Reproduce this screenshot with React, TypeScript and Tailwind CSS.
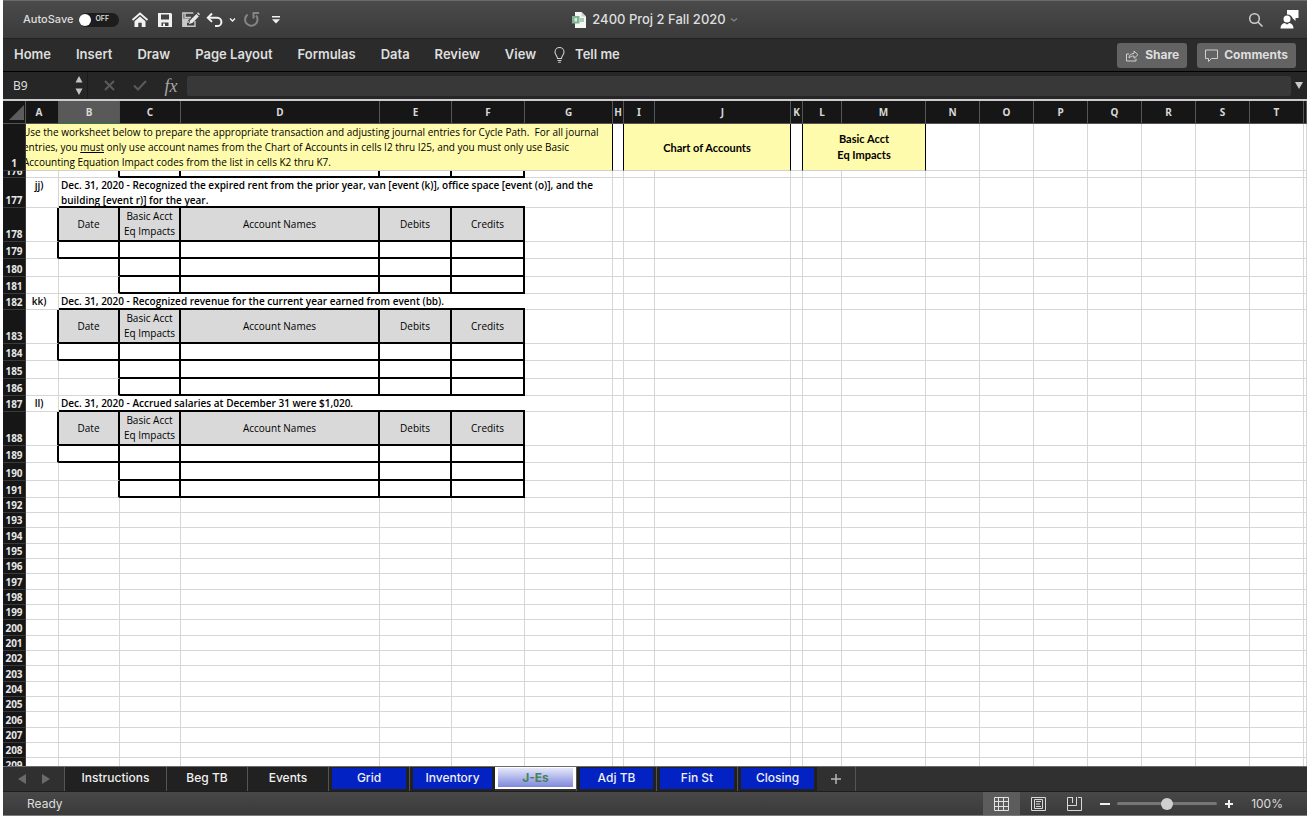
import { useState, type ReactNode } from "react";
import clsx from "clsx";

const columns = [
    { name: "A", width: "w-[33px]" },
    { name: "B", width: "w-[61px]" },
    { name: "C", width: "w-[61px]" },
    { name: "D", width: "w-[199px]" },
    { name: "E", width: "w-[72px]" },
    { name: "F", width: "w-[73px]" },
    { name: "G", width: "w-[88px]" },
    { name: "H", width: "w-[11px]" },
    { name: "I", width: "w-[31px]" },
    { name: "J", width: "w-[136px]" },
    { name: "K", width: "w-[12px]" },
    { name: "L", width: "w-[39px]" },
    { name: "M", width: "w-[84px]" },
    { name: "N", width: "w-[54px]" },
    { name: "O", width: "w-[54px]" },
    { name: "P", width: "w-[54px]" },
    { name: "Q", width: "w-[54px]" },
    { name: "R", width: "w-[54px]" },
    { name: "S", width: "w-[54px]" },
    { name: "T", width: "w-[54px]" },
    { name: "", width: "" },
];

const ribbonTabs = ["Home", "Insert", "Draw", "Page Layout", "Formulas", "Data", "Review", "View"];

const sheets = [
    { name: "Instructions", width: "w-[102px]", blue: false },
    { name: "Beg TB", width: "w-[81px]", blue: false },
    { name: "Events", width: "w-[81px]", blue: false },
    { name: "Grid", width: "w-[81px]", blue: true },
    { name: "Inventory", width: "w-[86px]", blue: true },
    { name: "J-Es", width: "w-[81px]", blue: true },
    { name: "Adj TB", width: "w-[80px]", blue: true },
    { name: "Fin St", width: "w-[81px]", blue: true },
    { name: "Closing", width: "w-[80px]", blue: true },
];

const entries = [
    {
        row: 177,
        code: "jj)",
        lines: [
            "Dec. 31, 2020 - Recognized the expired rent from the prior year, van [event (k)], office space [event (o)], and the",
            "building [event r)] for the year.",
        ],
    },
    {
        row: 182,
        code: "kk)",
        lines: ["Dec. 31, 2020 - Recognized revenue for the current year earned from event (bb)."],
    },
    {
        row: 187,
        code: "ll)",
        lines: ["Dec. 31, 2020 - Accrued salaries at December 31 were $1,020."],
    },
];

const emptyRows = Array.from({ length: 17 }, (_, i) => 192 + i);

export default function App() {
    return (
        <div className="pl-[3px] pr-px bg-white font-['Inter',sans-serif] text-[#dedede]">
            <TitleBar />
            <Ribbon />
            <FormulaBar />
            <Sheet />
            <SheetTabs />
            <StatusBar />
        </div>
    );
}

function TitleBar() {
    const [autoSave, setAutoSave] = useState(false);

    return (
        <header className="grid grid-cols-[1fr_auto_1fr] items-center h-[38px] px-2 border-t border-[#6a6a6a] bg-linear-to-b from-[#4a4a4a] to-[#3b3b3b]">
            <div className="flex items-center pl-3">
                <label htmlFor="autosave" className="text-[11px] font-medium">
                    AutoSave
                </label>
                <span className="relative ml-1.5 flex items-center w-10 h-3.5 rounded-full bg-[#1d1d1d]">
                    <input
                        id="autosave"
                        type="checkbox"
                        role="switch"
                        checked={autoSave}
                        onChange={(e) => setAutoSave(e.target.checked)}
                        className="peer appearance-none size-3 rounded-full bg-white checked:translate-x-7"
                    />
                    <span className="ml-1 text-[7px] font-semibold">{autoSave ? "" : "OFF"}</span>
                </span>
                <div className="flex items-center ml-3 text-[#f2f2f2]">
                    <ToolButton label="Home">
                        <svg width="18" height="18" viewBox="0 0 18 18" fill="none" stroke="currentColor">
                            <path d="M1.5 9 9 2.5 16.5 9" strokeWidth="1.8" />
                            <path d="M3.5 10.2 9 5.5l5.5 4.7V16h-3.8v-4.2H7.3V16H3.5z" fill="currentColor" stroke="none" />
                        </svg>
                    </ToolButton>
                    <ToolButton label="Save" className="ml-2">
                        <svg width="16" height="16" viewBox="0 0 16 16" fill="currentColor" fillRule="evenodd">
                            <path d="M1 1h13l1 1v13H1zM4 2.500v5h8v-5zM4.500 10.500V14H6v-2.500h2V14h3.500v-3.500z" />
                        </svg>
                    </ToolButton>
                    <ToolButton label="Save As" className="ml-2">
                        <svg width="19" height="17" viewBox="0 0 19 17" fill="none" stroke="#c9c9c9" strokeWidth="1.4">
                            <path d="M14 10v5.2H1.8V2h10.5" />
                            <path d="M4 2v4.5h6M5 15v-4h3" />
                            <path d="M2 7.5h7l-3 3.5v4H2z" fill="#c9c9c9" stroke="none" />
                            <path d="m8 13 1-3.6L15.4 3l2.4 2.4-6.4 6.5z" fill="#e8e8e8" stroke="none" />
                            <path d="m16 2.3 1-1 2 2-1 1z" fill="#e8e8e8" stroke="none" />
                        </svg>
                    </ToolButton>
                    <ToolButton label="Undo" className="ml-1.5">
                        <svg width="17" height="16" viewBox="0 0 17 16" fill="none" stroke="currentColor" strokeWidth="2">
                            <path d="M6 1.5 1.8 5.7 6 9.9" />
                            <path d="M2 5.7h9.2a4.2 4.2 0 0 1 0 8.4H9" />
                        </svg>
                    </ToolButton>
                    <ToolButton label="Undo history" className="ml-1.5">
                        <svg width="7" height="6" viewBox="0 0 7 6" fill="none" stroke="currentColor" strokeWidth="1.4">
                            <path d="m1 1.5 2.5 2.5L6 1.5" />
                        </svg>
                    </ToolButton>
                    <ToolButton label="Repeat" className="ml-2">
                        <svg width="16" height="17" viewBox="0 0 16 17" fill="none" stroke="#858585" strokeWidth="2">
                            <path d="M3.600 3.600A6.200 6.200 0 1 0 12 4.500" />
                            <path d="M9.500 7.500V2H15" />
                        </svg>
                    </ToolButton>
                    <ToolButton label="Customize toolbar" className="ml-3">
                        <svg width="8" height="9" viewBox="0 0 8 9" fill="currentColor">
                            <path d="M0 1h8v1.6H0zM0 4.2h8L4 8.4z" />
                        </svg>
                    </ToolButton>
                </div>
            </div>

            <button className="flex items-center text-[13px] font-medium">
                <svg width="14" height="16" viewBox="0 0 14 16" className="mr-1.5">
                    <path d="M3 0h6.5L14 4.5V16H3z" fill="#f4f7f4" />
                    <path d="M9.5 0v4.5H14z" fill="#c7d3ca" />
                    <path d="M0 4h7.5v7.5H0z" fill="#7fb392" />
                    <path d="M8 6h4v4H8z" fill="#a9cdb5" />
                    <path d="M2.5 6h2.5v3.5H2.5z" fill="#d9ebdf" />
                </svg>
                2400 Proj 2 Fall 2020
                <svg width="8" height="6" viewBox="0 0 8 6" fill="none" stroke="#888" strokeWidth="1.2" className="ml-1">
                    <path d="m1 1.5 3 2.5 3-2.5" />
                </svg>
            </button>

            <div className="flex items-center justify-end gap-4">
                <ToolButton label="Search">
                    <svg width="16" height="16" viewBox="0 0 16 16" fill="none" stroke="#cfcfcf" strokeWidth="1.5">
                        <circle cx="6.5" cy="6.5" r="4.8" />
                        <path d="m10 10 4.5 4.5" />
                    </svg>
                </ToolButton>
                <ToolButton label="Account">
                    <svg width="19" height="19" viewBox="0 0 19 19" fill="#fff">
                        <path d="M7 0h11.500v8h-3v3l-3-3A5.500 5.500 0 0 0 7 4.500z" />
                        <circle cx="7" cy="9" r="3.500" />
                        <path d="M.5 18.500c0-3.400 1.800-5.200 4.200-5.600L7 14.500l2.300-1.600c2.400.4 4.200 2.200 4.200 5.600z" />
                    </svg>
                </ToolButton>
            </div>
        </header>
    );
}

function ToolButton({ label, className, children }: { label: string; className?: string; children: ReactNode }) {
    return (
        <button aria-label={label} className={clsx("flex items-center justify-center", className)}>
            {children}
        </button>
    );
}

function Ribbon() {
    return (
        <nav className="flex items-center h-[34px] px-[11px] border-t border-b border-t-[#222] border-b-black bg-[#2b2b2b] text-[13px] font-semibold">
            <div className="flex gap-[25px]">
                {ribbonTabs.map((tab) => (
                    <button key={tab}>{tab}</button>
                ))}
            </div>
            <button className="flex items-center ml-[18px]">
                <svg width="11" height="16" viewBox="0 0 11 16" fill="none" stroke="#cfcfcf" strokeWidth="1.1" className="mr-2.5">
                    <path d="M3.5 11.5C3.5 9 1 8 1 5a4.5 4.5 0 0 1 9 0c0 3-2.5 4-2.5 6.5zM3.5 13.5h4M4.2 15.2h2.6" />
                </svg>
                Tell me
            </button>
            <div className="flex gap-2.5 ml-auto text-xs font-bold">
                <button className="flex items-center h-[25px] px-2 rounded-[3px] bg-[#636363]">
                    <svg width="14" height="13" viewBox="0 0 14 13" fill="none" stroke="#d0d0d0" className="mr-1.5">
                        <path d="M4 5H1.5v7H11V9.5" />
                        <path d="M4 9c0-3 2-4.5 5-4.5V2l4 3.7-4 3.7V7C7 7 5.500 7.500 4 9z" />
                    </svg>
                    Share
                </button>
                <button className="flex items-center h-[25px] px-2 rounded-[3px] bg-[#636363]">
                    <svg width="13" height="13" viewBox="0 0 13 13" fill="none" stroke="#d0d0d0" className="mr-1.5">
                        <path d="M.5 1h12v8.500H6.500L3.500 12.500V9.500H.5z" />
                    </svg>
                    Comments
                </button>
            </div>
        </nav>
    );
}

function FormulaBar() {
    return (
        <div className="flex items-center h-[29px] border-b-2 border-[#cfcacf] bg-[#262626]">
            <input
                aria-label="Name box"
                defaultValue="B9"
                className="w-[72px] pl-2.5 bg-transparent font-['Noto_Sans',sans-serif] text-xs outline-none"
            />
            <button aria-label="Name list" className="w-[13px] h-full border-r border-[#1c1c1c]">
                <svg width="8" height="19" viewBox="0 0 8 19" fill="#c4c4c4">
                    <path d="M.5 6.500 4 0l3.500 6.500zM.5 12.500h7L4 19z" />
                </svg>
            </button>
            <button aria-label="Cancel" className="ml-4">
                <svg width="11" height="11" viewBox="0 0 11 11" stroke="#5a5a5a" strokeWidth="2">
                    <path d="m1 1 9 9M10 1l-9 9" />
                </svg>
            </button>
            <button aria-label="Enter" className="ml-[18px]">
                <svg width="14" height="11" viewBox="0 0 14 11" fill="none" stroke="#5a5a5a" strokeWidth="2">
                    <path d="m1 5.500 4 4L13 1" />
                </svg>
            </button>
            <button
                aria-label="Insert function"
                className="ml-4 w-4 font-['Liberation_Serif',serif] text-[18px] leading-5 italic text-[#a8a8a8]"
            >
                fx
            </button>
            <input
                aria-label="Formula"
                className="flex-1 ml-2 h-5 px-2 rounded-xs bg-[#383838] text-xs outline-none"
            />
            <button aria-label="Expand formula bar" className="px-1">
                <svg width="8" height="7" viewBox="0 0 8 7" fill="#c9c9c9">
                    <path d="M0 0h8L4 7z" />
                </svg>
            </button>
        </div>
    );
}

function Sheet() {
    return (
        <div className="overflow-hidden">
            <table className="w-full table-fixed border-separate border-spacing-0 bg-white font-['Open_Sans',sans-serif] text-[10px] leading-[15px] text-black">
                <colgroup>
                    <col className="w-[23px]" />
                    {columns.map((col, i) => (
                        <col key={i} className={col.width} />
                    ))}
                </colgroup>
                <thead>
                    <tr className="h-[23px] bg-[#161616] font-['Noto_Sans',sans-serif] text-[#d8d8d8]">
                        <th className="p-0 border-r border-b border-[#555]">
                            <svg width="15" height="15" viewBox="0 0 15 15" fill="#5c5c5c" className="ml-1.5">
                                <path d="M15 0v15H0z" />
                            </svg>
                        </th>
                        {columns.map((col, i) => (
                            <th
                                key={i}
                                scope="col"
                                className={clsx(
                                    "p-0 text-center font-bold border-r border-b border-r-[#555]",
                                    col.name === "B" ? "bg-[#595959] border-b-[#2f7d3d]" : "border-b-[#555]",
                                    col.name === "A" && "pr-1.5",
                                )}
                            >
                                {col.name}
                            </th>
                        ))}
                    </tr>
                </thead>
                <tbody>
                    <tr className="h-[47px]">
                        <RowHeader>1</RowHeader>
                        <td colSpan={7} className="p-0 bg-[#fffbac] border-r border-b border-r-black border-b-[#d0d0d0]">
                            <div className="overflow-hidden whitespace-nowrap">
                                <div className="-ml-[3px]">
                                    Use the worksheet below to prepare the appropriate transaction and adjusting journal
                                    entries for Cycle Path.&nbsp; For all journal
                                    <br />
                                    entries, you <u>must</u> only use account names from the Chart of Accounts in cells I2
                                    thru I25, and you must only use Basic
                                    <br />
                                    Accounting Equation Impact codes from the list in cells K2 thru K7.
                                </div>
                            </div>
                        </td>
                        <Cell className="border-r-black" />
                        <td colSpan={2} className="p-0 text-center font-['Lato',sans-serif] text-[11px] font-bold bg-[#fffbac] border-r border-b border-r-black border-b-[#d0d0d0]">
                            Chart of Accounts
                        </td>
                        <Cell className="border-r-black" />
                        <td colSpan={2} className="p-0 text-center font-['Lato',sans-serif] text-[11px] leading-4 font-bold bg-[#fffbac] border-r border-b border-r-black border-b-[#d0d0d0]">
                            Basic Acct
                            <br />
                            Eq Impacts
                        </td>
                        <GridCells from={13} />
                    </tr>
                    <tr className="h-[7px]">
                        <th className="p-0 bg-[#161616] border-r border-b border-[#3a3a3a]">
                            <div className="flex items-end justify-center h-[6px] overflow-hidden font-['Noto_Sans',sans-serif] text-[10px] leading-3 font-bold text-[#e6e6e6]">
                                176
                            </div>
                        </th>
                        <Cell />
                        <Cell className="border-r-2 border-r-black" />
                        {["C", "D", "E", "F"].map((c) => (
                            <Cell key={c} className="border-r-2 border-b-2 border-black" />
                        ))}
                        <GridCells from={6} />
                    </tr>
                    {entries.map((entry) => (
                        <EntryRows key={entry.row} {...entry} />
                    ))}
                    {emptyRows.map((n, i) => (
                        <tr key={n} className={i % 3 === 2 ? "h-4" : "h-[15px]"}>
                            <RowHeader>{n}</RowHeader>
                            <GridCells from={0} />
                        </tr>
                    ))}
                    <tr className="h-2">
                        <th className="p-0 bg-[#161616] border-r border-[#3a3a3a]">
                            <div className="h-2 overflow-hidden font-['Noto_Sans',sans-serif] text-[10px] leading-[15px] font-bold text-[#e6e6e6]">
                                209
                            </div>
                        </th>
                        {columns.map((_, i) => (
                            <td key={i} className="p-0 border-r border-[#d6d6d6]" />
                        ))}
                    </tr>
                </tbody>
            </table>
        </div>
    );
}

function EntryRows({ row, code, lines }: { row: number; code: string; lines: string[] }) {
    return (
        <>
            <tr className={lines.length > 1 ? "h-[30px]" : "h-4"}>
                <RowHeader>{row}</RowHeader>
                <Cell className="pr-1.5 align-top text-center font-semibold">{code}</Cell>
                {/* description spills over B to G, the frame below starts with its bottom border */}
                <td colSpan={5} className="p-0 pl-0.5 align-top font-semibold whitespace-nowrap border-b-2 border-black">
                    <div className="h-[14px]">
                        {lines.map((line) => (
                            <div key={line}>{line}</div>
                        ))}
                    </div>
                </td>
                <GridCells from={6} />
            </tr>
            <tr className="h-[34px]">
                <RowHeader>{row + 1}</RowHeader>
                <Cell className="border-r-2 border-r-black" />
                <HeadCell>Date</HeadCell>
                <HeadCell>
                    Basic Acct
                    <br />
                    Eq Impacts
                </HeadCell>
                <HeadCell>Account Names</HeadCell>
                <HeadCell>Debits</HeadCell>
                <HeadCell>Credits</HeadCell>
                <GridCells from={6} />
            </tr>
            {[2, 3, 4].map((n) => (
                <tr key={n} className={n === 3 ? "h-[18px]" : "h-[17px]"}>
                    <RowHeader>{row + n}</RowHeader>
                    <Cell className={n === 2 ? "border-r-2 border-r-black" : ""} />
                    <Cell className={n === 2 ? "border-r-2 border-b-2 border-black" : "border-r-2 border-r-black"} />
                    {["C", "D", "E", "F"].map((c) => (
                        <Cell key={c} className="border-r-2 border-b-2 border-black" />
                    ))}
                    <GridCells from={6} />
                </tr>
            ))}
        </>
    );
}

function RowHeader({ children }: { children: ReactNode }) {
    return (
        <th
            scope="row"
            className="p-0 align-bottom text-center font-['Noto_Sans',sans-serif] text-[10px] leading-[14px] font-bold text-[#e6e6e6] bg-[#161616] border-r border-b border-[#3a3a3a]"
        >
            {children}
        </th>
    );
}

function Cell({ className, children }: { className?: string; children?: ReactNode }) {
    const custom = className ?? "";
    return (
        <td
            className={clsx(
                "p-0",
                !custom.includes("border-r-2") && "border-r",
                !custom.includes("border-b-2") && "border-b",
                !custom.includes("border-black") && "border-b-[#d6d6d6]",
                !custom.includes("-black") && "border-r-[#d6d6d6]",
                custom,
            )}
        >
            {children}
        </td>
    );
}

function HeadCell({ children }: { children: ReactNode }) {
    return (
        <th className="p-0 text-center font-normal whitespace-nowrap bg-[#d9d9d9] border-r-2 border-b-2 border-black">
            {children}
        </th>
    );
}

// plain cells from the given column to the right edge
function GridCells({ from }: { from: number }) {
    return columns.slice(from).map((_, i) => <Cell key={i} />);
}

function SheetTabs() {
    const [active, setActive] = useState("J-Es");

    return (
        <div className="flex h-[26px] bg-[#303030] border-t border-b border-t-[#6b6b6b] border-b-[#1e1e1e] text-xs font-medium">
            <div className="flex items-center justify-center gap-4 w-[61px]">
                <button aria-label="Previous sheet">
                    <svg width="8" height="10" viewBox="0 0 8 10" fill="#6a6a6a">
                        <path d="M8 0v10L0 5z" />
                    </svg>
                </button>
                <button aria-label="Next sheet">
                    <svg width="8" height="10" viewBox="0 0 8 10" fill="#6a6a6a">
                        <path d="M0 0v10l8-5z" />
                    </svg>
                </button>
            </div>
            {sheets.map(({ name, width, blue }) => (
                <button
                    key={name}
                    onClick={() => setActive(name)}
                    className={clsx(
                        "flex flex-col h-full px-[3px]",
                        width,
                        name === active
                            ? "pt-px bg-white border-b-2 border-b-[#303030]"
                            : "pt-px bg-[#212121] border-l border-[#555]",
                    )}
                >
                    <span
                        className={clsx(
                            "block w-full",
                            name === active
                                ? "h-[19px] leading-5 font-bold text-[#45835a] bg-linear-to-b from-[#e6e8f8] to-[#8087dc]"
                                : "h-[21px] leading-5 text-[#f0f0f0]",
                            name !== active && blue && "bg-[#0222c4]",
                        )}
                    >
                        {name}
                    </span>
                </button>
            ))}
            <button aria-label="Add sheet" className="flex items-center justify-center w-[39px] border-r border-[#555]">
                <svg width="10" height="10" viewBox="0 0 10 10" stroke="#b5b5b5" strokeWidth="1.500">
                    <path d="M5 0v10M0 5h10" />
                </svg>
            </button>
        </div>
    );
}

function StatusBar() {
    const [zoom, setZoom] = useState(100);

    return (
        <footer className="flex items-center h-6 px-6 border-b border-[#7c7c7c] bg-linear-to-b from-[#484848] to-[#3a3a3a] text-xs">
            <span>Ready</span>
            <div className="flex items-center h-full ml-auto">
                <button aria-label="Normal view" className="flex items-center justify-center w-[37px] h-full bg-[#5c5c5c]">
                    <svg width="15" height="14" viewBox="0 0 15 14" fill="none" stroke="#e2e2e2">
                        <path d="M.5.500h14v13H.5zM4.500 0v14M9.500 0v14M0 4.500h15M0 9.500h15" />
                    </svg>
                </button>
                <button aria-label="Page layout view" className="flex items-center justify-center w-9 h-full">
                    <svg width="15" height="14" viewBox="0 0 15 14" fill="none" stroke="#d8d8d8">
                        <path d="M.5.500h14v13H.5z" />
                        <path d="M3.500 2.500h8v9h-8zM5 4.500h5M5 7h4M5 9.500h5" />
                    </svg>
                </button>
                <button aria-label="Page break view" className="flex items-center justify-center w-9 h-full">
                    <svg width="15" height="14" viewBox="0 0 15 14" fill="none" stroke="#d8d8d8">
                        <path d="M3 .500H.5v13h14V.500H11M.5 8.500h9V0M5.500 0v6M5.500 .500H3" />
                    </svg>
                </button>
                <button aria-label="Zoom out" className="ml-2">
                    <svg width="10" height="10" viewBox="0 0 10 10" stroke="#f0f0f0" strokeWidth="2">
                        <path d="M0 5h10" />
                    </svg>
                </button>
                <input
                    type="range"
                    aria-label="Zoom"
                    min={0}
                    max={200}
                    value={zoom}
                    onChange={(e) => setZoom(Number(e.target.value))}
                    className="appearance-none w-[100px] h-[3px] ml-[7px] mr-2 rounded-full bg-[#767676] [&::-webkit-slider-thumb]:appearance-none [&::-webkit-slider-thumb]:size-3 [&::-webkit-slider-thumb]:rounded-full [&::-webkit-slider-thumb]:bg-[#cfcfcf]"
                />
                <button aria-label="Zoom in">
                    <svg width="8" height="8" viewBox="0 0 8 8" stroke="#f0f0f0" strokeWidth="2">
                        <path d="M4 0v8M0 4h8" />
                    </svg>
                </button>
                <span className="w-9 ml-3.5 text-right">{zoom}%</span>
            </div>
        </footer>
    );
}
